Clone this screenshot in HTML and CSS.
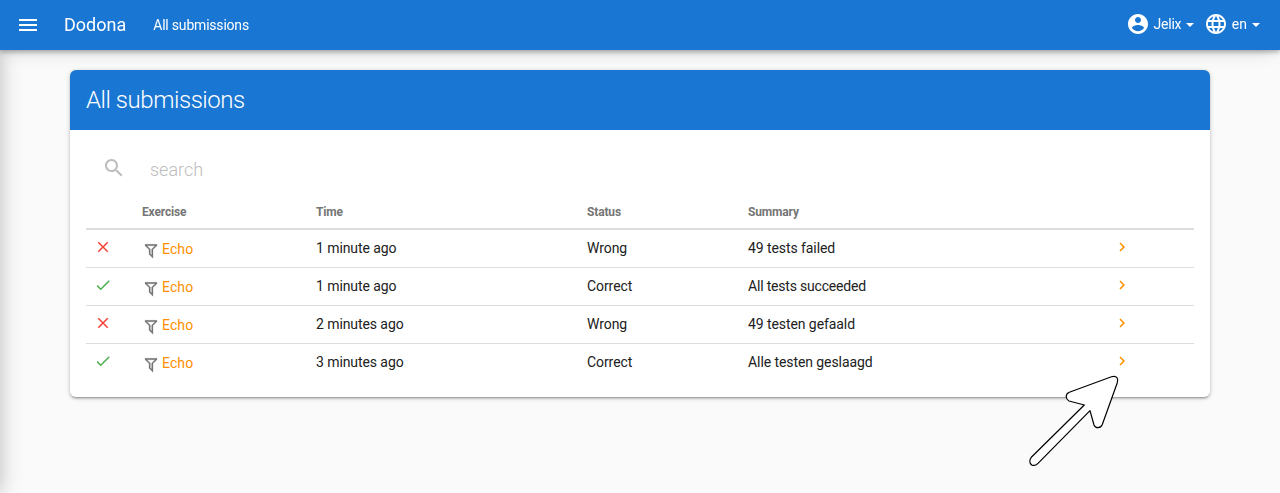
FILE: index.html
```html
<!DOCTYPE html>
<html lang="en">
<head>
<meta charset="utf-8">
<title>All submissions - Dodona</title>
<link rel="stylesheet" href="styles.css">
</head>
<body>
<svg class="sprite" aria-hidden="true">
  <symbol id="close" viewBox="0 0 24 24"><path d="M19 6.41L17.59 5 12 10.59 6.41 5 5 6.41 10.59 12 5 17.59 6.41 19 12 13.41 17.59 19 19 17.59 13.41 12z"/></symbol>
  <symbol id="check" viewBox="0 0 24 24"><path d="M21 7L9 19l-5.500-5.500 1.410-1.410L9 16.170 19.590 5.590z"/></symbol>
  <symbol id="filter" viewBox="0 0 24 24"><path d="M3 2H21V4H20.920L15 9.920V22.910L9 16.910V9.910L3.090 4H3V2M11 16.080L13 18.080V9H13.090L18.090 4H5.920L10.920 9H11V16.080Z"/></symbol>
  <symbol id="chevron" viewBox="0 0 24 24"><path d="M8.590 16.590L13.170 12 8.590 7.410 10 6l6 6-6 6z"/></symbol>
</svg>
<aside class="drawer"></aside>
<header class="navbar">
  <svg class="icon-24" viewBox="0 0 24 24"><path d="M3 6h18v2H3zM3 11h18v2H3zM3 16h18v2H3z"/></svg>
  <a class="brand">Dodona</a>
  <a class="crumb">All submissions</a>
  <nav class="nav-right">
    <a class="nav-item">
      <svg class="icon-24" viewBox="0 0 24 24"><path d="M12 2C6.480 2 2 6.480 2 12s4.480 10 10 10 10-4.480 10-10S17.520 2 12 2zm0 3c1.660 0 3 1.340 3 3s-1.340 3-3 3-3-1.340-3-3 1.340-3 3-3zm0 14.200c-2.500 0-4.710-1.280-6-3.220.030-1.990 4-3.080 6-3.080s5.970 1.090 6 3.080c-1.290 1.940-3.500 3.220-6 3.220z"/></svg>
      <span class="user">Jelix</span><i class="caret"></i>
    </a>
    <a class="nav-item">
      <svg class="icon-24" viewBox="0 0 24 24"><path d="M11.990 2C6.470 2 2 6.480 2 12s4.470 10 9.990 10C17.520 22 22 17.520 22 12S17.520 2 11.990 2zm6.930 6h-2.950c-.320-1.250-.780-2.450-1.380-3.560 1.840.630 3.370 1.910 4.330 3.560zM12 4.040c.830 1.200 1.480 2.530 1.910 3.960h-3.820c.430-1.430 1.080-2.760 1.910-3.960zM4.260 14C4.100 13.360 4 12.690 4 12s.100-1.360.260-2h3.380c-.080.660-.140 1.320-.140 2s.060 1.340.140 2H4.260zm.820 2h2.950c.320 1.250.780 2.450 1.380 3.560-1.840-.630-3.370-1.900-4.330-3.560zm2.950-8H5.080c.960-1.660 2.490-2.930 4.330-3.560C8.810 5.550 8.350 6.750 8.030 8zM12 19.960c-.830-1.200-1.480-2.530-1.910-3.960h3.820c-.430 1.430-1.080 2.760-1.910 3.960zM14.340 14H9.660c-.090-.660-.160-1.320-.160-2s.070-1.350.160-2h4.680c.090.650.160 1.320.160 2s-.070 1.340-.160 2zm.250 5.560c.600-1.110 1.060-2.310 1.380-3.560h2.950c-.960 1.650-2.490 2.930-4.330 3.560zM16.360 14c.080-.660.140-1.320.140-2s-.060-1.340-.140-2h3.380c.160.640.260 1.310.260 2s-.100 1.360-.260 2h-3.380z"/></svg>
      <span>en</span><i class="caret"></i>
    </a>
  </nav>
</header>
<main class="card">
  <h1 class="card-title">All submissions</h1>
  <div class="card-body">
    <div class="search">
      <svg class="icon-24" viewBox="0 0 24 24"><path d="M15.500 14h-.790l-.280-.270C15.410 12.590 16 11.110 16 9.500 16 5.910 13.090 3 9.500 3S3 5.910 3 9.500 5.910 16 9.500 16c1.610 0 3.090-.590 4.230-1.570l.270.280v.790l5 4.990L20.490 19l-4.990-5zm-6 0C7.010 14 5 11.990 5 9.500S7.010 5 9.500 5 14 7.010 14 9.500 11.990 14 9.500 14z"/></svg>
      <span>search</span>
    </div>
    <div class="table">
      <div class="row head"><span></span><span>Exercise</span><span>Time</span><span>Status</span><span>Summary</span><span></span></div>
      <div class="row"><svg class="state wrong"><use href="#close"/></svg><span class="exercise"><svg class="filter"><use href="#filter"/></svg><a>Echo</a></span><span>1 minute ago</span><span>Wrong</span><span>49 tests failed</span><svg class="open"><use href="#chevron"/></svg></div>
      <div class="row"><svg class="state correct"><use href="#check"/></svg><span class="exercise"><svg class="filter"><use href="#filter"/></svg><a>Echo</a></span><span>1 minute ago</span><span>Correct</span><span class="tight">All tests succeeded</span><svg class="open"><use href="#chevron"/></svg></div>
      <div class="row"><svg class="state wrong"><use href="#close"/></svg><span class="exercise"><svg class="filter"><use href="#filter"/></svg><a>Echo</a></span><span>2 minutes ago</span><span>Wrong</span><span>49 testen gefaald</span><svg class="open"><use href="#chevron"/></svg></div>
      <div class="row"><svg class="state correct"><use href="#check"/></svg><span class="exercise"><svg class="filter"><use href="#filter"/></svg><a>Echo</a></span><span>3 minutes ago</span><span>Correct</span><span>Alle testen geslaagd</span><svg class="open"><use href="#chevron"/></svg></div>
    </div>
  </div>
</main>
<svg class="pointer" viewBox="1026 372 96 98"><path d="M1069.300 392.300L1111.500 376.800Q1115.500 375.500 1117.200 378Q1118.200 380 1117.200 383L1102.300 424.500Q1101 427.700 1098 427.700Q1095 427.700 1094 425L1090 410.700L1038 463.300Q1035 466.500 1031.700 465Q1028 461.500 1031.300 457.300L1084.300 405L1069 401Q1066.300 399.500 1066.200 396.500Q1066.300 393.500 1069.300 392.300Z"/></svg>
</body>
</html>
```
FILE: styles.css
```css
* { box-sizing: border-box; }
body {
  margin: 0;
  height: 493px;
  overflow: hidden;
  background: #fafafa;
  color: #212121;
  font: 14px/20px Roboto, sans-serif;
}
svg { display: block; fill: currentColor; flex: none; }
.sprite { position: absolute; width: 0; height: 0; }
.icon-24 { width: 24px; height: 24px; }
.drawer {
  position: fixed;
  top: 0;
  bottom: 0;
  left: -250px;
  width: 250px;
  box-shadow: 0 0 20px rgba(0, 0, 0, .25);
}
.navbar {
  position: relative;
  display: flex;
  align-items: center;
  height: 50px;
  padding: 0 20px 0 16px;
  background: #1976d2;
  color: #fff;
  box-shadow: 0 8px 17px -6px rgba(0, 0, 0, .15), 0 2px 5px rgba(0, 0, 0, .3);
}
.brand { margin-left: 24px; font-size: 18px; }
.crumb { margin-left: 27px; letter-spacing: -.2px; }
.nav-right { display: flex; gap: 10px; margin-left: auto; padding-bottom: 2px; }
.nav-item { display: flex; align-items: center; }
.nav-item span { margin-left: 3px; }
.nav-item .user { letter-spacing: -.2px; }
.nav-item:last-child span { margin-left: 3.5px; }
.caret {
  margin: 2px 0 0 5px;
  border: 4px solid transparent;
  border-top-color: #fff;
  border-bottom: 0;
}
.card {
  width: 1140px;
  height: 327px;
  margin: 20px auto 0;
  border-radius: 6px;
  background: #fff;
  box-shadow: 0 2px 2px rgba(0, 0, 0, .14), 0 3px 1px -2px rgba(0, 0, 0, .14), 0 1px 5px rgba(0, 0, 0, .2);
}
.card-title {
  margin: 0;
  height: 60px;
  padding: 0 16px;
  border-radius: 6px 6px 0 0;
  background: #1976d2;
  color: #fff;
  font-size: 24px;
  font-weight: 300;
  line-height: 60px;
  letter-spacing: -.45px;
}
.card-body { padding: 16px; }
.search {
  display: flex;
  align-items: center;
  height: 47px;
  padding-left: 16px;
  color: #bdbdbd;
  font-size: 18px;
  font-weight: 300;
}
.search .icon-24 { margin-bottom: 3px; }
.search span { margin-left: 24px; }
.row {
  display: grid;
  grid-template-columns: 56px 174px 271px 161px 365px 1fr;
  align-items: center;
  height: 38px;
  padding-bottom: 1px;
  border-top: 1px solid #ddd;
  letter-spacing: -.08px;
}
.row.head {
  height: 35px;
  padding: 2px 0 0;
  border: 0;
  color: #757575;
  font-size: 12px;
  font-weight: 700;
  letter-spacing: -.15px;
}
.row.head + .row { height: 39px; border-top-width: 2px; }
.tight { letter-spacing: -.19px; }
.state { width: 18px; height: 18px; margin: 0 0 2px 8px; }
.wrong { color: #f44336; }
.correct { color: #4caf50; }
.exercise { display: flex; align-items: center; padding-top: 2px; color: #ff8f00; letter-spacing: .1px; }
.filter { width: 16px; height: 16px; margin: 3px 3px 0 1px; color: #757575; stroke: currentColor; stroke-width: .4; }
.open { width: 18px; height: 18px; margin-bottom: 2px; color: #ff8f00; }
.pointer {
  position: absolute;
  left: 1026px;
  top: 372px;
  width: 96px;
  height: 98px;
  fill: #fff;
  stroke: #000;
  stroke-width: 1.2;
  stroke-linejoin: round;
}
```
